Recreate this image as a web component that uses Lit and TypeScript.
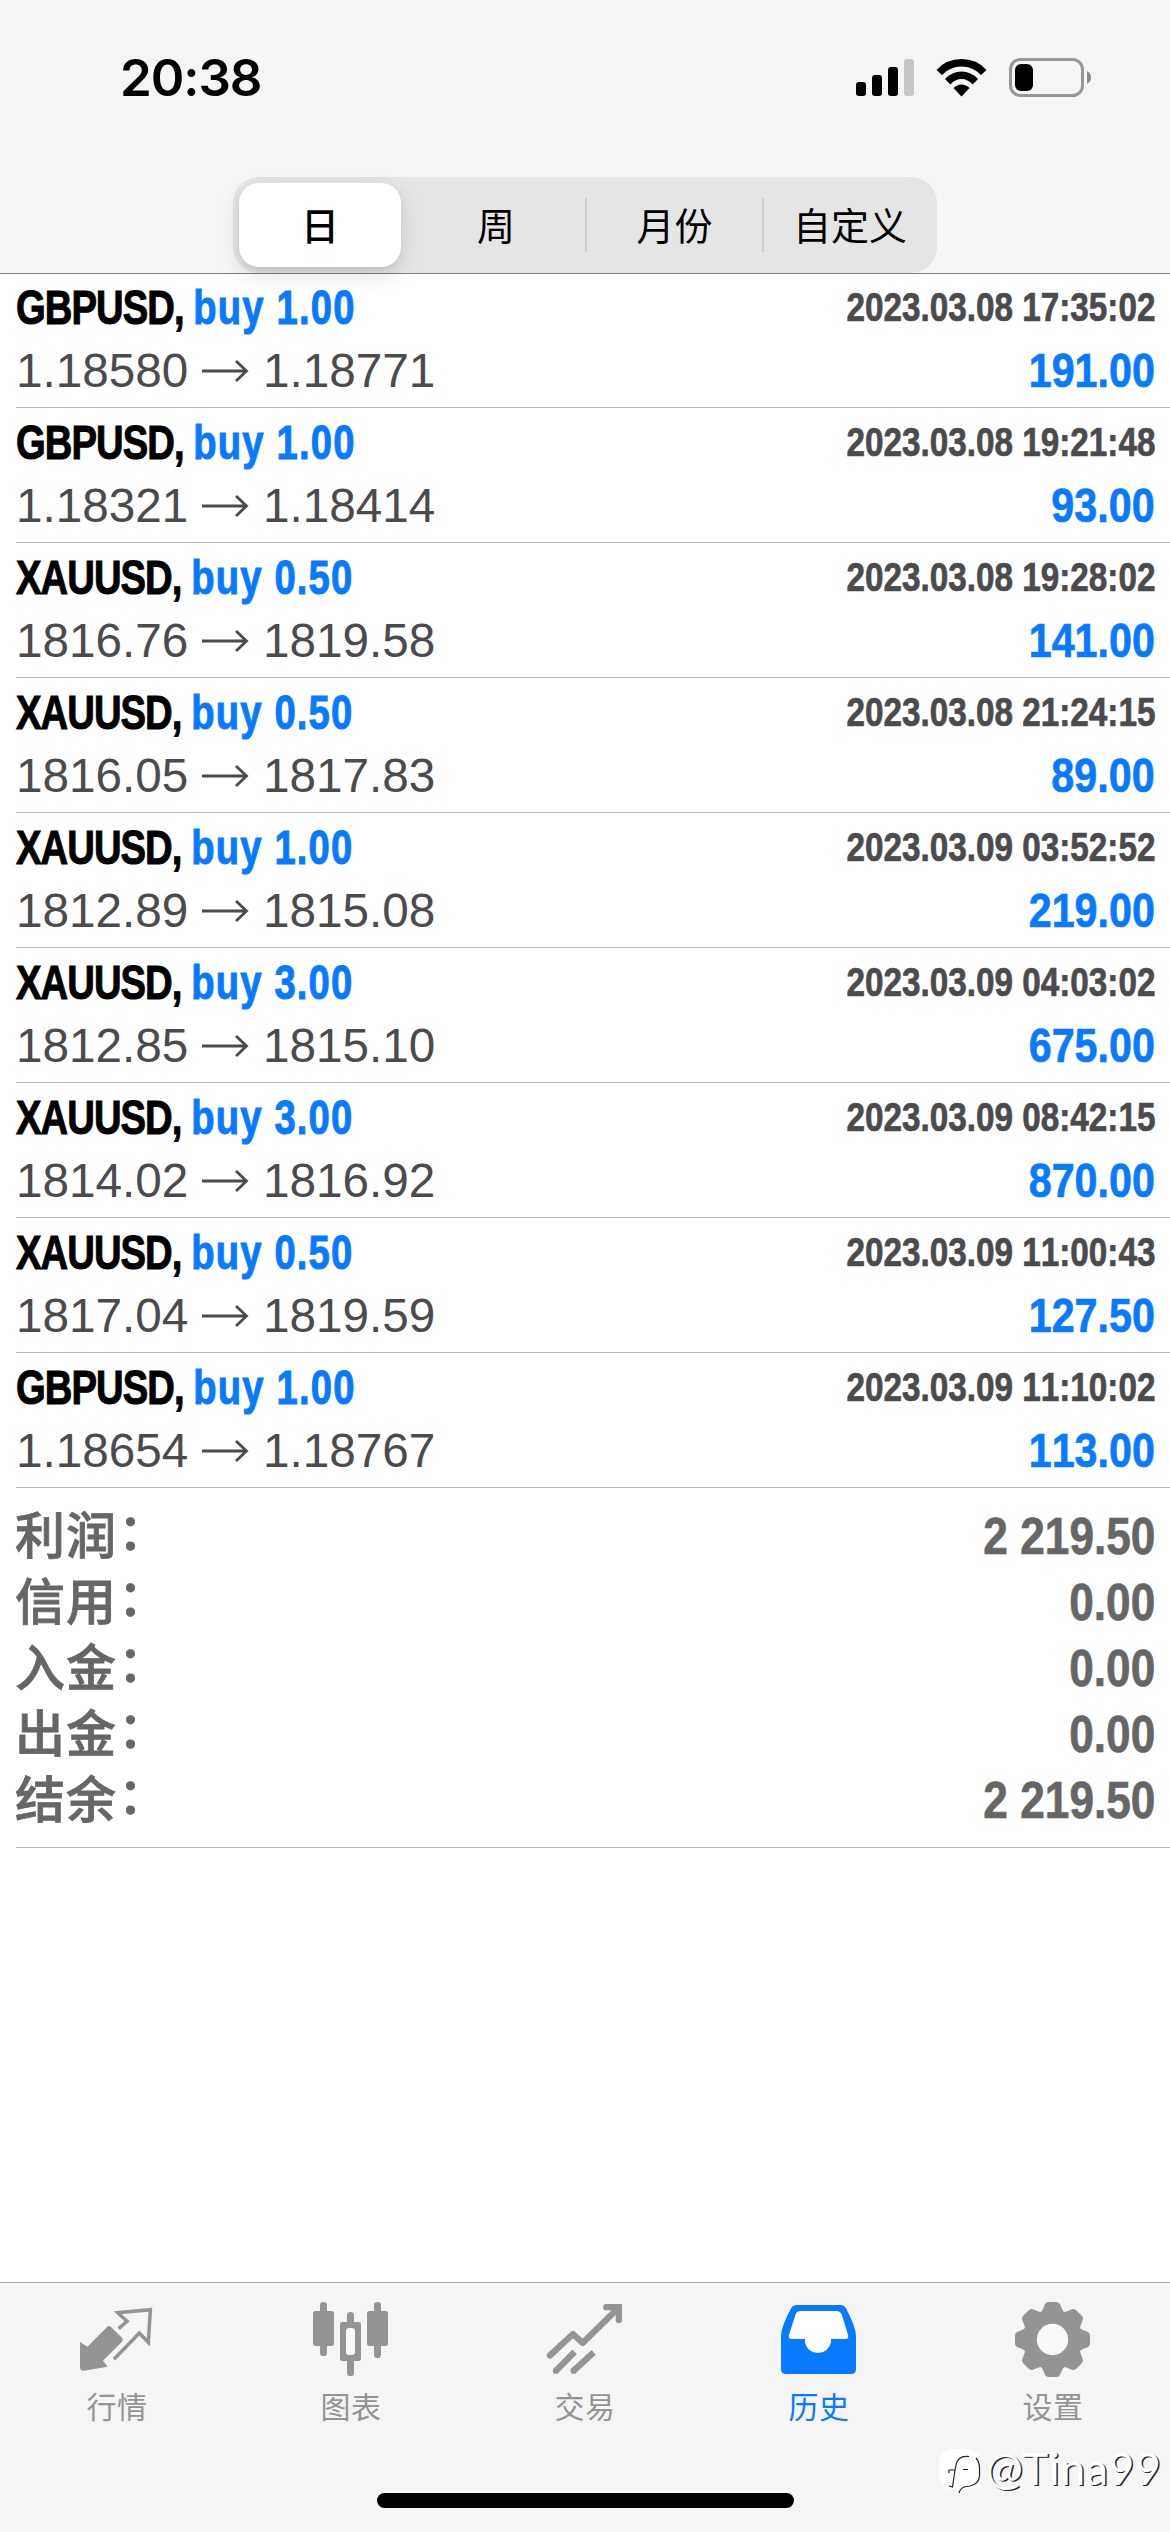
import { LitElement, html, css, svg } from "lit";
import { customElement } from "lit/decorators.js";

interface Deal {
  symbol: string;
  volume: string;
  open: string;
  close: string;
  time: string;
  profit: string;
}

const deals: Deal[] = [
  { symbol: "GBPUSD", volume: "1.00", open: "1.18580", close: "1.18771", time: "2023.03.08 17:35:02", profit: "191.00" },
  { symbol: "GBPUSD", volume: "1.00", open: "1.18321", close: "1.18414", time: "2023.03.08 19:21:48", profit: "93.00" },
  { symbol: "XAUUSD", volume: "0.50", open: "1816.76", close: "1819.58", time: "2023.03.08 19:28:02", profit: "141.00" },
  { symbol: "XAUUSD", volume: "0.50", open: "1816.05", close: "1817.83", time: "2023.03.08 21:24:15", profit: "89.00" },
  { symbol: "XAUUSD", volume: "1.00", open: "1812.89", close: "1815.08", time: "2023.03.09 03:52:52", profit: "219.00" },
  { symbol: "XAUUSD", volume: "3.00", open: "1812.85", close: "1815.10", time: "2023.03.09 04:03:02", profit: "675.00" },
  { symbol: "XAUUSD", volume: "3.00", open: "1814.02", close: "1816.92", time: "2023.03.09 08:42:15", profit: "870.00" },
  { symbol: "XAUUSD", volume: "0.50", open: "1817.04", close: "1819.59", time: "2023.03.09 11:00:43", profit: "127.50" },
  { symbol: "GBPUSD", volume: "1.00", open: "1.18654", close: "1.18767", time: "2023.03.09 11:10:02", profit: "113.00" },
];

const totals: [string, string][] = [
  ["利润", "2 219.50"],
  ["信用", "0.00"],
  ["入金", "0.00"],
  ["出金", "0.00"],
  ["结余", "2 219.50"],
];

const tabs = [
  {
    label: "行情",
    view: "225 84 252 252",
    icon: svg`
      <path d="M240 216 L262 230 L321 171 Q327 165 333 171 L366 203 Q371 209 366 215 L309 272 L323 290 L252 302 Q240 303 240 292 Z" fill="currentColor"/>
      <path d="M356 176 L381 154 L353 128 L451 119 L445 217 L418 189 L342 268" fill="none" stroke="currentColor" stroke-width="10.500"/>`,
  },
  {
    label: "图表",
    view: "927 84 252 252",
    icon: svg`
      <g fill="currentColor">
        <rect x="960" y="96" width="21" height="162" rx="10"/><rect x="939" y="123" width="63" height="105" rx="7"/>
        <rect x="1122" y="96" width="21" height="168" rx="10"/><rect x="1101" y="123" width="63" height="105" rx="7"/>
        <rect x="1041" y="126" width="21" height="40" rx="10"/><rect x="1041" y="260" width="21" height="58" rx="10"/>
        <rect x="1020" y="156" width="63" height="117" rx="7"/>
      </g>
      <rect x="1038" y="174" width="27" height="81" rx="9" fill="#fafafa"/>`,
  },
  {
    label: "交易",
    view: "309 84 252 252",
    icon: svg`
      <g fill="none" stroke="currentColor" stroke-width="19">
        <path d="M330 256 L399 192 L428 219 L534 115" stroke-linecap="round" stroke-linejoin="round"/>
        <path d="M499 111.500 H536.500 V150" stroke-linecap="round" stroke-linejoin="miter"/>
        <path d="M404 245 L348 302 M461 247 L401 302"/>
      </g>
      <g fill="currentColor"><circle cx="348" cy="302" r="9.500"/><circle cx="401" cy="302" r="9.500"/></g>`,
  },
  {
    label: "历史",
    view: "1011 84 252 252",
    active: true,
    icon: svg`
      <path fill="currentColor" d="M1068 105 H1204 Q1212 105 1217 113 Q1247 168 1248 198 V297 Q1248 312 1233 312 H1038 Q1023 312 1023 297 V198 Q1024 168 1054 113 Q1059 105 1068 105 Z"/>
      <path fill="#fff" d="M1083 123 Q1071 123 1067 133 L1047 194 Q1044 207 1055 207 H1095 V216 A39.500 39.500 0 0 0 1173 216 V207 H1217 Q1227 207 1224 194 L1205 133 Q1200 123 1189 123 Z"/>`,
  },
  {
    label: "设置",
    view: "393 84 252 252",
    icon: svg`
      <g transform="translate(517.500 208.500)" fill="currentColor">
        ${[0, 45, 90, 135, 180, 225, 270, 315].map(
          (a) => svg`<path transform=${`rotate(${a})`} d="M-37 -80 Q-31 -85 -28 -93 L-23 -105 Q-20 -112.500 -12 -112.500 H12 Q20 -112.500 23 -105 L28 -93 Q31 -85 37 -80 L30 -50 H-30 Z"/>`,
        )}
        <circle r="86"/>
        <circle r="47" fill="#f9f9f9"/>
      </g>`,
  },
];

@customElement("app-root")
export class AppRoot extends LitElement {
  static styles = css`
    :host {
      display: flex;
      flex-direction: column;
      position: relative;
      width: 1170px;
      height: 2532px;
      overflow: hidden;
      background: #fff;
      color: #000;
      font-family: "Liberation Sans", "Noto Sans CJK SC", sans-serif;
      font-kerning: none;
      --blue: #087aff;
    }
    * { box-sizing: border-box; }
    .header {
      height: 274px;
      flex: none;
      background: #f5f5f5;
      border-bottom: 1px solid #808080;
      display: flex;
      flex-direction: column;
      align-items: center;
    }
    .status {
      width: 100%;
      height: 177px;
      padding: 48px 76px 0 120px;
      display: flex;
      justify-content: space-between;
      align-items: flex-start;
    }
    .clock {
      font: 600 51px/60px Inter, sans-serif;
      letter-spacing: -1.100px;
    }
    .indicators { width: 240px; height: 60px; }
    .segments {
      width: 704px;
      height: 96px;
      flex: none;
      padding: 6px;
      border-radius: 26px;
      background: #e5e5e6;
      display: grid;
      grid-template-columns: 162px 184px 177px 1fr;
      align-items: center;
    }
    .segment {
      height: 54px;
      display: flex;
      align-items: center;
      justify-content: center;
      font: 400 38px/54px "Noto Sans CJK SC", sans-serif;
      padding-bottom: 3px;
      border-left: 2px solid #cfcfd1;
    }
    .segment:nth-child(2) { border-color: transparent; padding-left: 4px; }
    .segment:nth-child(4) { padding-left: 5px; }
    .selected {
      height: 84px;
      border: 0;
      border-radius: 20px;
      background: #fff;
      font-weight: 500;
      box-shadow: 0 8px 22px rgba(0, 0, 0, 0.12), 0 3px 4px rgba(0, 0, 0, 0.06);
    }
    .deals, .totals { flex: none; padding-left: 16px; }
    .deal {
      height: 135px;
      padding: 3px 15px 0 0;
      border-bottom: 1px solid #bdbdbf;
    }
    .deal:first-child { height: 134px; padding-top: 2px; }
    .line {
      display: flex;
      justify-content: space-between;
      height: 63px;
      line-height: 63px;
      white-space: pre;
    }
    .narrow {
      display: block;
      font-weight: 700;
      -webkit-text-stroke: 0.7px currentColor;
      transform-origin: 0 50%;
    }
    .title { font-size: 49px; transform: scaleX(0.78); letter-spacing: -1.200px; -webkit-text-stroke-width: 1px; }
    .side { color: var(--blue); letter-spacing: 1.500px; }
    .time {
      font-size: 40px;
      color: #4b4b4e;
      transform: scaleX(0.832);
      transform-origin: 100% 50%;
    }
    .prices { font-size: 47.700px; color: #4b4b4e; display: flex; }
    .arrow { width: 47px; height: 63px; margin: 0 14px 0 13.500px; }
    .profit {
      font-size: 49px;
      color: var(--blue);
      transform: scaleX(0.842);
      transform-origin: 100% 50%;
    }
    .totals { color: #666; }
    .sheet { height: 360px; padding: 16px 15px 0 0; border-bottom: 1px solid #bdbdbf; }
    .total { display: flex; justify-content: space-between; height: 66px; line-height: 66px; white-space: pre; }
    .name {
      font-size: 50px;
      font-weight: 500;
      letter-spacing: 1px;
      margin-left: -1px;
      -webkit-text-stroke: 0.8px currentColor;
    }
    .colon { position: relative; top: -4px; left: 1px; }
    .amount { font-size: 52px; transform: translateY(-1px) scaleX(0.85); transform-origin: 100% 50%; }
    .tabbar {
      margin-top: auto;
      height: 250px;
      flex: none;
      border-top: 1px solid #a3a3a5;
      background: #f5f5f5;
      display: flex;
      flex-direction: column;
      align-items: center;
      justify-content: space-between;
      padding: 15px 0 24px;
    }
    .tabs { width: 100%; display: grid; grid-template-columns: repeat(5, 1fr); }
    .tab { display: flex; flex-direction: column; align-items: center; color: #949494; }
    .tab.active { color: var(--blue); }
    .glyph { width: 84px; height: 84px; display: block; }
    .caption { font: 400 30px/44px "Noto Sans CJK SC", sans-serif; letter-spacing: 0.5px; margin-top: 1px; }
    .home { width: 417px; height: 15px; border-radius: 8px; background: #000; }
    .watermark {
      position: absolute;
      left: 938px;
      top: 2446px;
      display: flex;
      align-items: flex-start;
      gap: 4px;
      color: #fff;
      font: 400 44px/44px Lato, sans-serif;
      letter-spacing: 0.9px;
      text-shadow: 1.500px 1px 0 #222;
    }
    .badge { width: 44px; height: 52px; }
  `;

  private renderIndicators() {
    return html`<svg class="indicators" viewBox="854 48 240 60">
      <rect x="856" y="82" width="10" height="14" rx="3" />
      <rect x="872" y="75" width="10" height="21" rx="3" />
      <rect x="888" y="67" width="10" height="29" rx="3" />
      <rect x="904" y="59" width="10" height="37" rx="3" fill="#c6c6c6" />
      <path d="M936.500 70 Q946 59 961.500 59 Q977 59 986.500 70 L981 75 Q973 66.500 961.500 66.500 Q950 66.500 942 75 Z" />
      <path d="M945 79 Q952 71.500 961.500 71.500 Q971 71.500 978 79 L972.500 84.500 Q968 79 961.500 79 Q955 79 950.500 84.500 Z" />
      <path d="M953.500 88 Q957 84.500 961.500 84.500 Q966 84.500 969.500 88 L961.500 96.500 Z" />
      <rect x="1010.500" y="59.500" width="72" height="36" rx="10" fill="none" stroke="#979797" stroke-width="3" />
      <rect x="1015" y="64" width="18" height="27" rx="6" />
      <path d="M1087 71 Q1091 73 1091 77.500 Q1091 82 1087 84 Z" fill="#8b8b8b" />
    </svg>`;
  }

  private renderDeal(d: Deal) {
    return html`<div class="deal">
      <div class="line">
        <span class="narrow title">${d.symbol}, <span class="side">buy ${d.volume}</span></span>
        <span class="narrow time">${d.time}</span>
      </div>
      <div class="line">
        <span class="prices">${d.open}<svg class="arrow" viewBox="0 0 47 63"><path d="M0 32 H44 M34 22 L44.500 32 L34 42" fill="none" stroke="currentColor" stroke-width="2.800"/></svg>${d.close}</span>
        <span class="narrow profit">${d.profit}</span>
      </div>
    </div>`;
  }

  render() {
    return html`
      <header class="header">
        <div class="status"><span class="clock">20:38</span>${this.renderIndicators()}</div>
        <div class="segments">
          <div class="segment selected">日</div>
          <div class="segment">周</div>
          <div class="segment">月份</div>
          <div class="segment">自定义</div>
        </div>
      </header>
      <section class="deals">${deals.map((d) => this.renderDeal(d))}</section>
      <section class="totals">
        <div class="sheet">
          ${totals.map(([k, v]) => html`<div class="total"><span class="name">${k}<span class="colon">：</span></span><span class="narrow amount">${v}</span></div>`)}
        </div>
      </section>
      <nav class="tabbar">
        <div class="tabs">
          ${tabs.map((t) => html`<div class="tab ${t.active ? "active" : ""}">
            <svg class="glyph" viewBox=${t.view}>${t.icon}</svg>
            <span class="caption">${t.label}</span>
          </div>`)}
        </div>
        <div class="home"></div>
      </nav>
      <div class="watermark">
        <svg class="badge" viewBox="0 0 44 52">
          <rect x="1" y="3" width="41" height="40" rx="13" fill="#fff" />
          <path d="M11 27 V24 H17 M31 10.500 Q20 9 18 19 L17 24 L14.500 41 L11 40 M25 23.500 H30 M38 12 Q41.500 16 41.500 22 V30 Q41 38 32 40 L26 41 Q22 43 21 47" fill="none" stroke="#222" stroke-width="1.200" />
        </svg>
        <span>@Tina99</span>
      </div>
    `;
  }
}
